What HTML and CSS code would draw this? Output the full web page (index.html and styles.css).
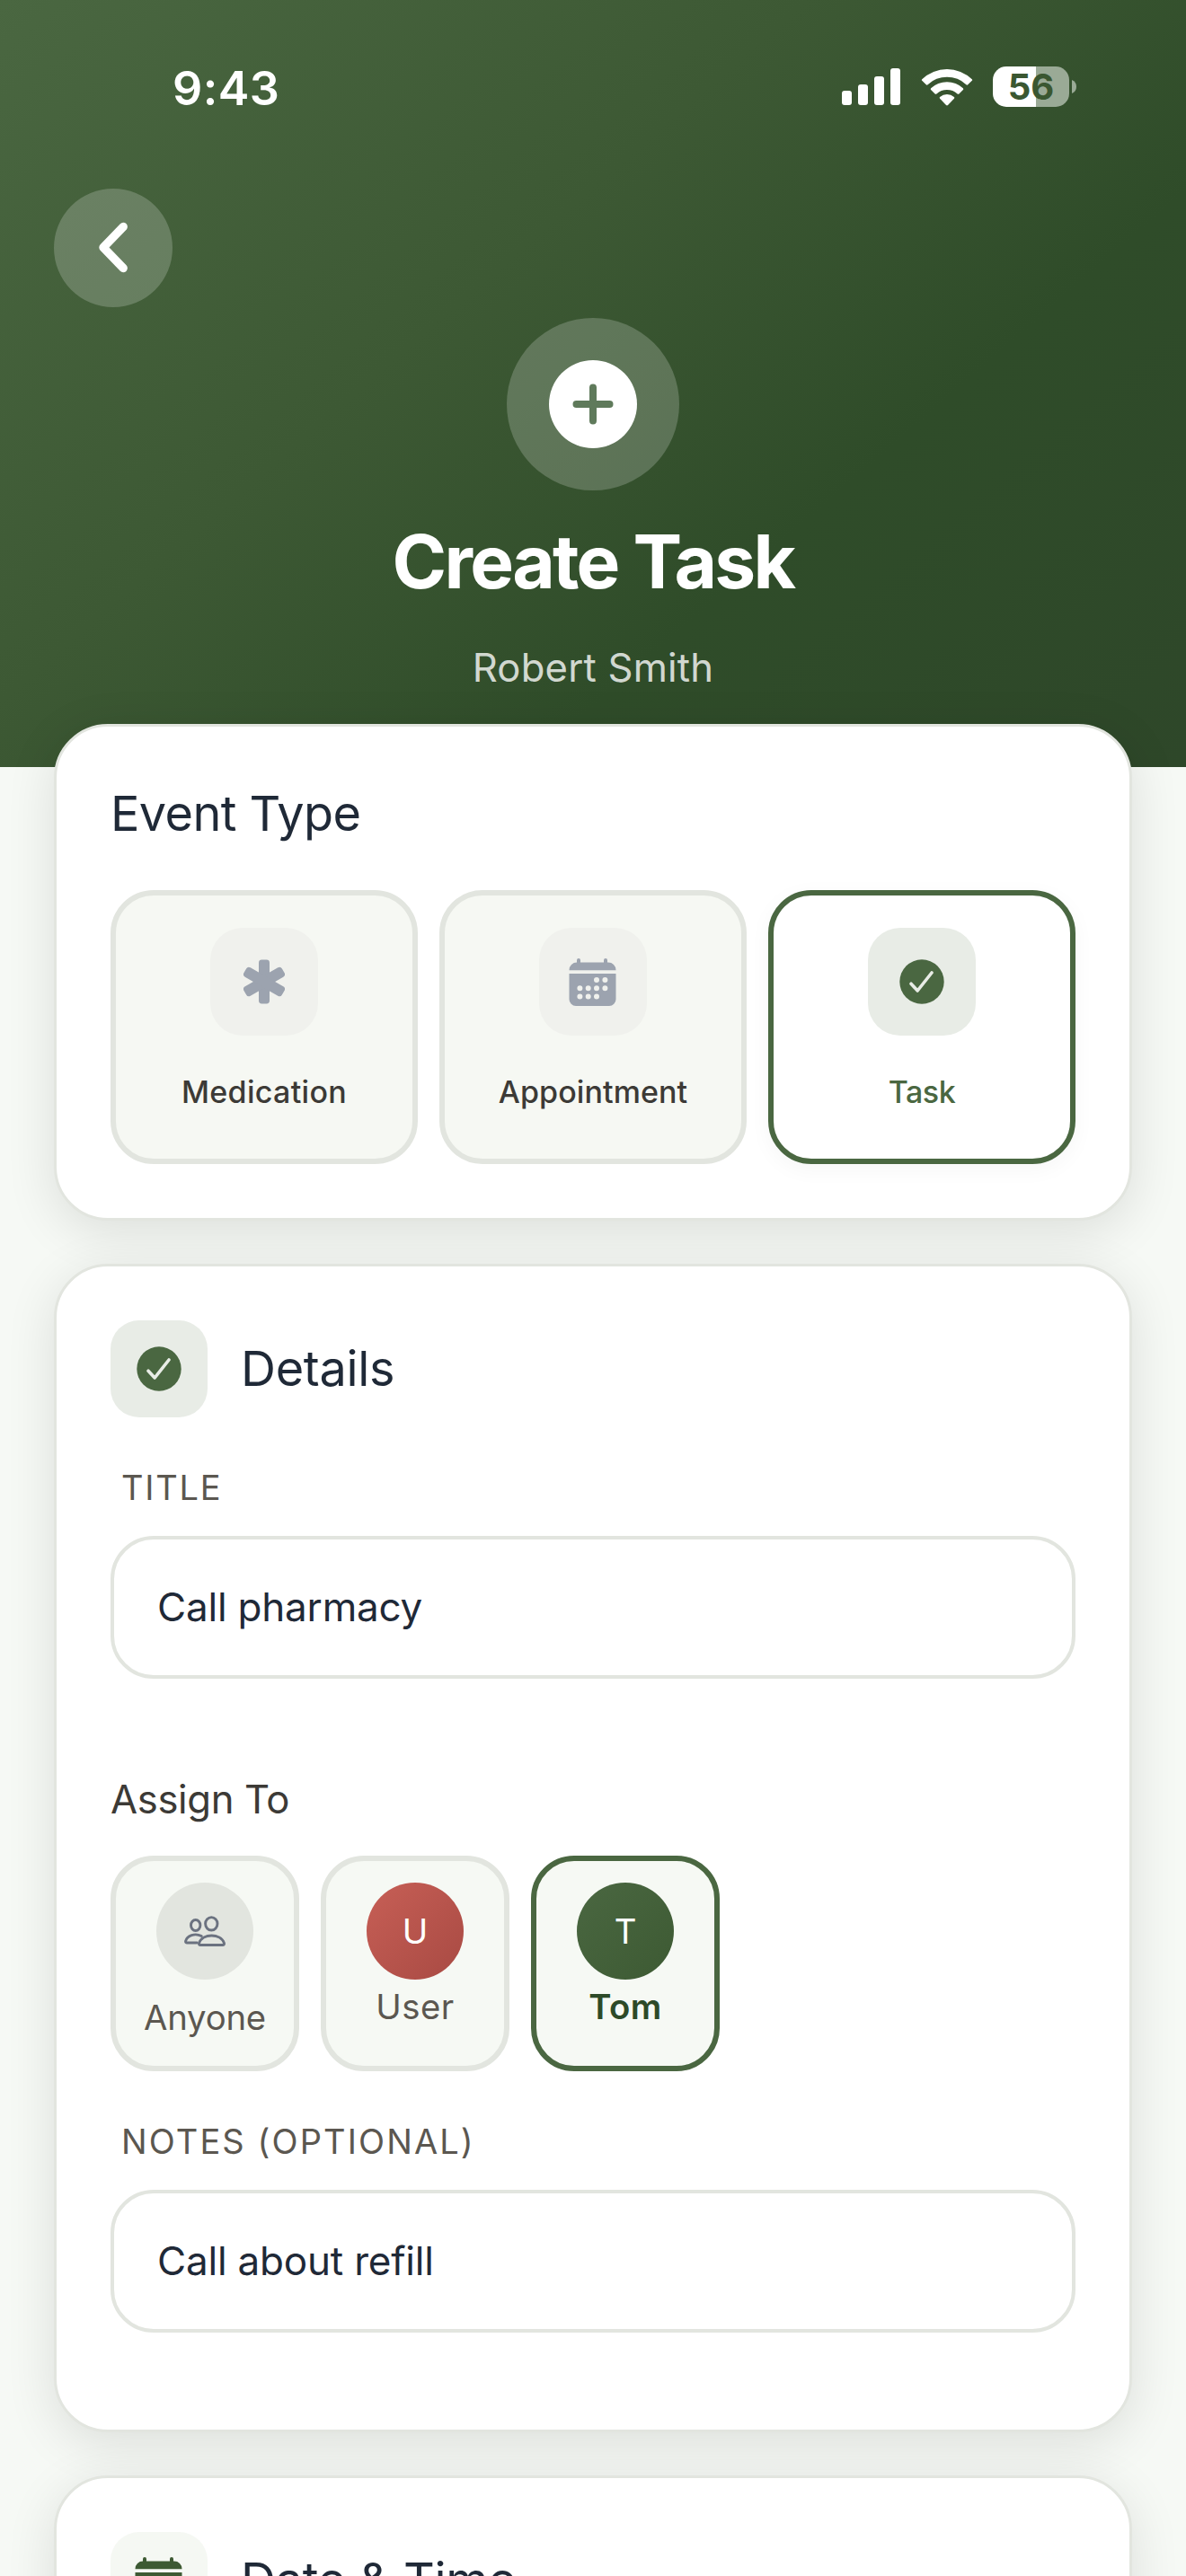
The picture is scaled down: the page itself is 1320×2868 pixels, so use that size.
FILE: index.html
```html
<!DOCTYPE html>
<html lang="en">
<head>
<meta charset="utf-8">
<title>Create Task</title>
<link rel="stylesheet" href="styles.css">
</head>
<body>
<svg class="defs" width="0" height="0" aria-hidden="true">
  <symbol id="check" viewBox="0 0 50 50">
    <circle cx="25" cy="25" r="24.7" fill="#4a6741"/>
    <path d="M13 27.2 L20.2 35 L36 15" fill="none" stroke="#e8ece6" stroke-width="3.6" stroke-linecap="round" stroke-linejoin="round"/>
  </symbol>
  <symbol id="calendar" viewBox="0 0 54 54">
    <path d="M9 5.5 V3 a2 2 0 0 1 4 0 V5.5 H39 V3 a2 2 0 0 1 4 0 V5.5 H44 A8.5 8.5 0 0 1 52.5 14 V14.2 H0.5 V14 A8.5 8.5 0 0 1 9 5.5 Z" fill="currentColor"/>
    <path fill-rule="evenodd" fill="currentColor" d="M0.5 18 H52.5 V46.5 A7.5 7.5 0 0 1 45 54 H8 A7.5 7.5 0 0 1 0.5 46.5 Z
      M28 25 a3 3 0 1 0 6 0 a3 3 0 1 0 -6 0 Z M37.4 25 a3 3 0 1 0 6 0 a3 3 0 1 0 -6 0 Z
      M9.4 34.3 a3 3 0 1 0 6 0 a3 3 0 1 0 -6 0 Z M18.7 34.3 a3 3 0 1 0 6 0 a3 3 0 1 0 -6 0 Z M28 34.3 a3 3 0 1 0 6 0 a3 3 0 1 0 -6 0 Z M37.4 34.3 a3 3 0 1 0 6 0 a3 3 0 1 0 -6 0 Z
      M9.4 43.6 a3 3 0 1 0 6 0 a3 3 0 1 0 -6 0 Z M18.7 43.6 a3 3 0 1 0 6 0 a3 3 0 1 0 -6 0 Z M28 43.6 a3 3 0 1 0 6 0 a3 3 0 1 0 -6 0 Z"/>
  </symbol>
</svg>

<div class="screen">
  <header class="hero">
    <div class="status">
      <span class="time">9:43</span>
      <div class="indicators">
        <svg class="signal" width="65" height="41" viewBox="0 0 65 41" fill="#fff">
          <rect x="0" y="25" width="11" height="16" rx="3"/>
          <rect x="18" y="18" width="11" height="23" rx="3"/>
          <rect x="36" y="9" width="11" height="32" rx="3"/>
          <rect x="54" y="0" width="11" height="41" rx="3"/>
        </svg>
        <svg class="wifi" width="58" height="42" viewBox="0 0 58 42" fill="#fff">
          <path d="M1.2 12.2 A40 40 0 0 1 56.8 12.2 Q57.6 13 56.8 13.8 L52.2 18.3 Q51.3 19 50.4 18.2 A31 31 0 0 0 7.6 18.2 Q6.7 19 5.8 18.3 L1.2 13.8 Q.4 13 1.2 12.2 Z"/>
          <path d="M11.1 22.3 A26 26 0 0 1 46.9 22.3 Q47.7 23.2 46.9 24 L42.4 28.4 Q41.5 29.2 40.6 28.4 A17.5 17.5 0 0 0 17.4 28.4 Q16.5 29.2 15.6 28.4 L11.1 24 Q10.3 23.2 11.1 22.3 Z"/>
          <path d="M21.1 32 A12 12 0 0 1 36.9 32 Q37.8 32.8 36.9 33.8 L30 41.1 Q29 42 28 41.1 L21.1 33.8 Q20.2 32.8 21.1 32 Z"/>
        </svg>
        <div class="battery"><span class="level">56</span></div>
        <svg class="cap" width="5" height="15" viewBox="0 0 5 15"><path d="M0 0 Q5 2 5 7.5 Q5 13 0 15 Z" fill="#9aaa96"/></svg>
      </div>
    </div>
    <div class="back">
      <svg width="132" height="132" viewBox="0 0 132 132"><path d="M77.2 42.5 L55 65.5 L77.2 88.5" fill="none" stroke="#fff" stroke-width="9.4" stroke-linecap="round" stroke-linejoin="round"/></svg>
    </div>
    <div class="badge">
      <svg width="98" height="98" viewBox="0 0 98 98"><circle cx="49" cy="49" r="49" fill="#fff"/><path d="M49 30.5 V67.5 M30.5 49 H67.5" stroke="#5f7a5b" stroke-width="8" stroke-linecap="round"/></svg>
    </div>
    <h1 class="title">Create Task</h1>
    <p class="subtitle">Robert Smith</p>
  </header>

  <main class="cards">
    <section class="card">
      <h2 class="heading event-heading">Event Type</h2>
      <div class="types">
        <div class="type">
          <div class="type-icon">
            <svg width="46" height="50" viewBox="-23 -25 46 50" fill="#9ca3af">
              <rect x="-6" y="-24.5" width="12" height="49" rx="3.4"/>
              <rect x="-6" y="-24.5" width="12" height="49" rx="3.4" transform="rotate(60)"/>
              <rect x="-6" y="-24.5" width="12" height="49" rx="3.4" transform="rotate(-60)"/>
            </svg>
          </div>
          <span class="type-label">Medication</span>
        </div>
        <div class="type">
          <div class="type-icon muted"><svg width="54" height="54"><use href="#calendar"/></svg></div>
          <span class="type-label appointment">Appointment</span>
        </div>
        <div class="type selected">
          <div class="type-icon"><svg width="50" height="50"><use href="#check"/></svg></div>
          <span class="type-label task">Task</span>
        </div>
      </div>
    </section>

    <section class="card details">
      <div class="card-head">
        <div class="head-icon"><svg width="50" height="50"><use href="#check"/></svg></div>
        <h2 class="heading">Details</h2>
      </div>
      <div class="label">TITLE</div>
      <div class="field">Call pharmacy</div>
      <div class="assign-label">Assign To</div>
      <div class="people">
        <div class="person">
          <div class="avatar anyone">
            <svg width="46" height="34" viewBox="0 0 46 34" fill="none" stroke="#6b7280" stroke-width="2.9" stroke-linecap="round" stroke-linejoin="round">
              <ellipse cx="12.7" cy="10.5" rx="5.2" ry="6"/>
              <ellipse cx="30.3" cy="8.8" rx="6.7" ry="7.2"/>
              <path d="M19.2 22.6 C12 18.6 3 22.2 1.6 28.2 C1.4 29.5 2 30 3.2 30 H14.2"/>
              <path d="M18.2 32.5 H42.6 C44.4 32.5 44.8 31.6 44.4 30.2 C40.4 19.2 20.6 19.2 16.6 30.2 C16.2 31.6 16.6 32.5 18.2 32.5 Z"/>
            </svg>
          </div>
          <span class="name name-anyone">Anyone</span>
        </div>
        <div class="person">
          <div class="avatar user">U</div>
          <span class="name">User</span>
        </div>
        <div class="person selected">
          <div class="avatar tom">T</div>
          <span class="name">Tom</span>
        </div>
      </div>
      <div class="label notes">NOTES (OPTIONAL)</div>
      <div class="field">Call about refill</div>
    </section>

    <section class="card">
      <div class="card-head">
        <div class="head-icon pale"><svg width="54" height="54"><use href="#calendar"/></svg></div>
        <h2 class="heading">Date &amp; Time</h2>
      </div>
    </section>
  </main>
</div>
</body>
</html>
```
FILE: styles.css
```css
* { box-sizing: border-box; }

body {
  margin: 0;
  font-family: Inter, "Liberation Sans", sans-serif;
  background: #f6f9f5;
}

h1, h2, p { margin: 0; font-weight: 400; }
svg { display: block; flex: none; }
.defs { position: absolute; }

.screen {
  width: 1320px;
  height: 2868px;
  overflow: hidden;
  background: #f6f9f5;
}

/* Header */
.hero {
  height: 854px;
  display: flex;
  flex-direction: column;
  align-items: center;
  background: linear-gradient(139deg, #4a6741 0%, #3d5934 39%, #2f4c29 68%, #2e4729 100%);
  color: #fff;
}

.status {
  width: 100%;
  height: 193px;
  margin-bottom: 17px;
  padding: 0 122px 0 192px;
  display: flex;
  align-items: center;
  justify-content: space-between;
}

.time {
  padding-top: 4px;
  font-size: 52px;
  line-height: 64px;
  font-weight: 600;
  letter-spacing: 0.4px;
}

.indicators { display: flex; align-items: center; }
.wifi { margin-left: 23px; }

.battery {
  width: 85px;
  height: 45px;
  margin-left: 22px;
  border-radius: 15px;
  background: linear-gradient(90deg, #fff 48px, #9aaa96 48px);
  color: #3a5731;
  display: flex;
  align-items: center;
  justify-content: center;
}

.level { font-size: 40px; line-height: 45px; font-weight: 700; }
.cap { margin-left: 3px; }

.back {
  align-self: flex-start;
  width: 132px;
  height: 132px;
  margin-left: 60px;
  border-radius: 50%;
  background: rgba(255, 255, 255, 0.2);
}

.badge {
  width: 192px;
  height: 192px;
  margin-top: 12px;
  border-radius: 50%;
  background: rgba(255, 255, 255, 0.2);
  display: flex;
  align-items: center;
  justify-content: center;
}

.title {
  margin-top: 30px;
  font-size: 82px;
  line-height: 100px;
  font-weight: 700;
  letter-spacing: -2.7px;
}

.subtitle {
  margin-top: 40px;
  font-size: 43.6px;
  line-height: 56px;
  letter-spacing: 0.22px;
  color: rgba(255, 255, 255, 0.8);
}

/* Cards */
.cards {
  position: relative;
  margin-top: -48px;
  padding: 0 60px;
  display: flex;
  flex-direction: column;
  gap: 48px;
}

.card {
  padding: 60px;
  border: 3px solid #e2e5df;
  border-radius: 60px;
  background: #fff;
  box-shadow: 0 12px 56px rgba(0, 0, 0, 0.11);
}

.details { padding-bottom: 108px; }

.heading {
  font-size: 54px;
  line-height: 74px;
  letter-spacing: -0.3px;
  color: #1f2937;
}

.event-heading { letter-spacing: -0.6px; margin-bottom: 48px; }

.types {
  display: grid;
  grid-template-columns: repeat(3, 1fr);
  gap: 24px;
}

.type {
  height: 305px;
  padding-top: 36px;
  border: 6px solid #e2e5df;
  border-radius: 48px;
  background: #f6f8f3;
  display: flex;
  flex-direction: column;
  align-items: center;
}

.type-icon {
  width: 120px;
  height: 120px;
  border-radius: 36px;
  background: #f0f1ed;
  display: flex;
  align-items: center;
  justify-content: center;
}

.muted { color: #9ca3af; }

.type-label {
  margin-top: 24px;
  font-size: 34px;
  line-height: 77px;
  font-weight: 500;
  letter-spacing: 0.31px;
  color: #3c3a36;
}

.appointment { letter-spacing: 0.1px; }
.task { letter-spacing: -0.4px; }

.type.selected {
  border-color: #4a6741;
  background: #fff;
  box-shadow: 0 6px 24px rgba(0, 0, 0, 0.04);
}

.type.selected .type-icon { background: #e8ece6; }
.type.selected .type-label { color: #4a6741; }

.card-head { display: flex; align-items: center; gap: 37px; }

.head-icon {
  width: 108px;
  height: 108px;
  border-radius: 32px;
  background: #e8ece6;
  display: flex;
  align-items: center;
  justify-content: center;
}

.head-icon.pale { background: #f5f8f3; color: #3d5a33; }

.label {
  margin: 55px 0 31px;
  padding-left: 12px;
  font-size: 38px;
  line-height: 46px;
  letter-spacing: 1.74px;
  color: #5b5750;
}

.label.notes { letter-spacing: 2.1px; }

.field {
  height: 159px;
  padding: 0 48px;
  border: 4px solid #e2e5df;
  border-radius: 48px;
  font-size: 44px;
  line-height: 150px;
  letter-spacing: -0.2px;
  color: #1f2937;
}

.assign-label {
  margin: 108px 0 35px;
  font-size: 43.6px;
  line-height: 54px;
  letter-spacing: -0.35px;
  color: #3c3a36;
}

.people { display: flex; gap: 24px; }

.person {
  width: 210px;
  height: 240px;
  padding-top: 24px;
  border: 6px solid #e2e5df;
  border-radius: 48px;
  background: #f6f9f4;
  display: flex;
  flex-direction: column;
  align-items: center;
}

.person.selected { border-color: #4a6741; }

.avatar {
  width: 108px;
  height: 108px;
  border-radius: 50%;
  display: flex;
  align-items: center;
  justify-content: center;
  font-size: 38.3px;
  color: #fff;
}

.anyone { background: #e2e5df; }
.user { background: linear-gradient(135deg, #c75f56, #a84a43); }
.tom { background: linear-gradient(135deg, #4a6741, #3d5a33); }

.name {
  margin-top: 6px;
  font-size: 38.3px;
  line-height: 48px;
  letter-spacing: 0.45px;
  color: #5b5750;
}

.name-anyone { margin-top: 18px; letter-spacing: -0.2px; }
.person.selected .name { font-weight: 600; color: #2d4a28; }
```
